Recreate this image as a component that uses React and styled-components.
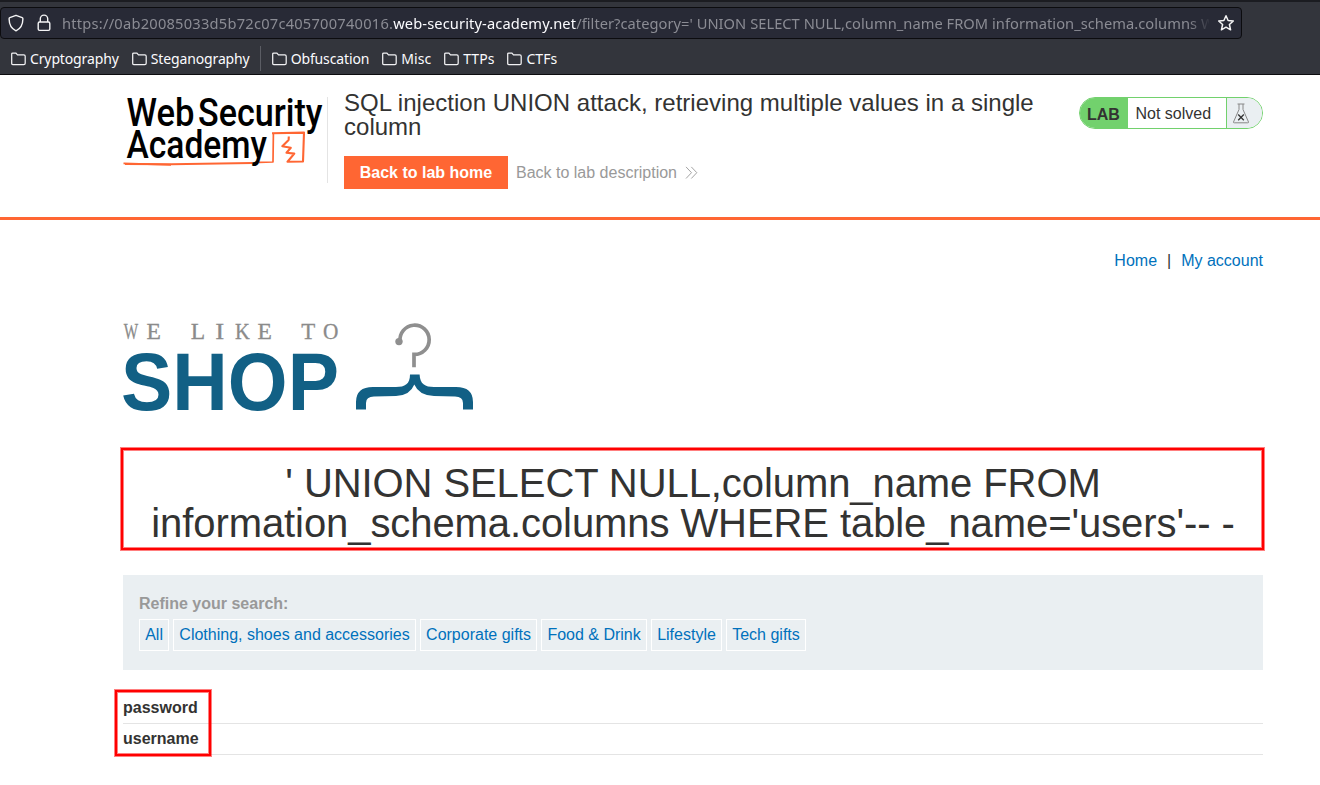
import React from "react";
import styled, { createGlobalStyle } from "styled-components";

const GlobalStyle = createGlobalStyle`
  * { box-sizing: border-box; }
  body { margin: 0; background: #fff; color: #333332; font: 16px/16px "Liberation Sans", Arial, sans-serif; }
  svg { display: block; flex: none; }
`;

const Page = styled.div`
  width: 1320px;
  height: 785px;
  overflow: hidden;
`;

const Chrome = styled.header`
  height: 75px;
  background: #33353c;
  border-top: 2px solid #1b1c21;
  border-bottom: 1px solid #0c0c0f;
  padding-top: 5px;
  font-family: "Noto Sans", sans-serif;
`;

const AddressBar = styled.div`
  width: 1242px;
  height: 32px;
  display: flex;
  align-items: center;
  padding: 0 6px;
  border: 1px solid #0c0c0f;
  border-radius: 4px;
  background: #282a36;
  color: #f4f4f5;
`;

const Url = styled.div`
  width: 1149px;
  margin-left: 10px;
  overflow: hidden;
  white-space: pre;
  font-size: 14.667px;
  line-height: 28px;
  color: #8b8c94;
  mask-image: linear-gradient(to right, #000 1126px, transparent 1149px);
`;

const UrlPart = styled.span`
  color: ${(p) => (p.$strong ? "#fbfbfe" : "inherit")};
  letter-spacing: ${(p) => p.$spacing}px;
`;

const Bookmarks = styled.nav`
  height: 35px;
  display: flex;
  align-items: center;
  padding-left: 11px;
  padding-top: 4px;
`;

const Bookmark = styled.div`
  display: flex;
  align-items: center;
  gap: 4px;
  margin-right: 13px;
  color: #fbfbfe;
  font-size: 14px;
  letter-spacing: ${(p) => (p.$short ? 0.05 : -0.13)}px;
  line-height: 20px;
  white-space: nowrap;
`;

const BookmarkDivider = styled.div`
  width: 1px;
  height: 25px;
  margin: 0 11px 0 -3px;
  background: #5b5d64;
`;

const LabHeader = styled.section`
  height: 145px;
  display: flex;
  align-items: flex-start;
  padding: 16px 57px 0 123px;
  border-bottom: 3px solid #ff6633;
`;

const LogoCell = styled.div`
  width: 205px;
  height: 86px;
  margin-top: 6px;
  border-right: 1px solid #e4e4e4;
`;

const TitleBlock = styled.div`
  flex: 1;
  padding-left: 16px;
`;

const LabTitle = styled.h2`
  width: 700px;
  margin: 0 0 17px;
  font-size: 24px;
  line-height: 24px;
  letter-spacing: 0.015px;
  font-weight: 400;
`;

const Actions = styled.div`
  display: flex;
  align-items: center;
`;

const LabButton = styled.a`
  width: 164px;
  height: 33px;
  background: #ff6633;
  color: #fff;
  font-weight: 700;
  line-height: 33px;
  text-align: center;
`;

const DescriptionLink = styled.a`
  display: flex;
  align-items: center;
  gap: 8px;
  margin-left: 8px;
  color: #999;
`;

const StatusBadge = styled.div`
  width: 184px;
  height: 32px;
  margin-top: 6px;
  display: flex;
  overflow: hidden;
  border: 1px solid #72d16d;
  border-radius: 16px;
  line-height: 31px;
`;

const BadgeLabel = styled.b`
  width: 48px;
  padding: 1px 0 0 7px;
  background: #72d16d;
`;

const BadgeStatus = styled.span`
  width: 99px;
  padding-left: 7.5px;
  border-right: 1px solid #72d16d;
`;

const BadgeIcon = styled.span`
  flex: 1;
  padding: 5px 0 0 5px;
  background: #eaeff2;
`;

const Content = styled.main`
  width: 1140px;
  margin-left: 123px;
`;

const TopLinks = styled.nav`
  height: 98px;
  display: flex;
  justify-content: flex-end;
  gap: 10px;
  padding-top: 33px;
`;

const Link = styled.a`
  color: #0071bc;
`;

const redOutline = `
  border: 2px solid #ff0000;
  box-shadow: 0 0 0 1px rgba(255, 0, 0, 0.5), inset 0 0 0 1px rgba(255, 0, 0, 0.5);
`;

const Headline = styled.div`
  height: 102px;
  width: 1143px;
  margin: 33px 0 0 -2px;
  padding: 13px 0 0 1px;
  ${redOutline}
`;

const HeadlineText = styled.h1`
  margin: 0;
  font-size: 40px;
  line-height: 40px;
  letter-spacing: -0.08px;
  font-weight: 400;
  text-align: center;
`;

const Filters = styled.section`
  height: 95px;
  margin: 25px 0 21px;
  padding: 21px 16px 0;
  background: #eaeff2;
`;

const FilterTitle = styled.div`
  color: #999;
  font-weight: 700;
  margin-bottom: 7px;
`;

const FilterList = styled.div`
  display: flex;
  gap: 4px;
`;

const Filter = styled.a`
  height: 32px;
  padding: 0 5.2px;
  border: 1px solid #fff;
  color: #0071bc;
  line-height: 30px;
  white-space: nowrap;
`;

const Results = styled.div`
  position: relative;
`;

const ResultRow = styled.div`
  height: ${(p) => (p.$first ? 33 : 31)}px;
  padding-top: ${(p) => (p.$first ? 9 : 7)}px;
  border-bottom: 1px solid #e4e4e4;
  font-weight: 700;
`;

const Highlight = styled.div`
  position: absolute;
  left: -8px;
  top: -1px;
  width: 96px;
  height: 66px;
  ${redOutline}
`;

const FolderIcon = () => (
  <svg width="15" height="14" viewBox="0 0 15 14" fill="none" stroke="#f1f1f3" strokeWidth="1.25">
    <path d="M.7 11.5V2.1Q.7 1 1.8 1h3.1l1.6 1.8h6.3q1.4 0 1.4 1.4v7q0 1.3-1.4 1.3H1.8Q.7 12.5.7 11.5Z" />
  </svg>
);

const ShieldIcon = () => (
  <svg width="18" height="18" viewBox="0 0 18 18" fill="none" stroke="#f4f4f5" strokeWidth="1.4" strokeLinejoin="round">
    <path d="M9 1.3 15.2 3.7Q16 4 15.9 5C15.8 11 13.5 14.8 9 16.8 4.5 14.8 2.2 11 2.1 5Q2 4 2.8 3.7Z" />
  </svg>
);

const Lock = styled.svg`
  margin-left: 11px;
`;

const LockIcon = () => (
  <Lock width="16" height="18" viewBox="0 0 16 18" fill="none" stroke="#f4f4f5" strokeWidth="1.4">
    <rect x="2.2" y="8" width="11.6" height="8.4" rx="1.4" />
    <path d="M4.3 8V4.8a3.7 3.7 0 0 1 7.4 0V8" />
  </Lock>
);

const Star = styled.svg`
  margin-left: 8px;
`;

const StarIcon = () => (
  <Star width="18" height="18" viewBox="0 0 18 18" fill="none" stroke="#f4f4f5" strokeWidth="1.5" strokeLinejoin="round">
    <path d="m9 1.8 2.1 4.7 5.2.5-3.9 3.5 1.2 5.3L9 13.2l-4.6 2.6 1.2-5.3L1.7 7l5.2-.5Z" />
  </Star>
);

const AcademyLogo = () => (
  <svg width="204" height="86" viewBox="123 97 204 86">
    <g fill="none" stroke="#ff6633" strokeLinejoin="round">
      <path d="M125 164 171 164.2 252 163" strokeWidth="2" />
      <path d="M123.5 163.3 171 164.8M259 162.3 273 162 273.4 133" strokeWidth="1.7" />
      <path d="M272 133.2 304 132.6 303 161.5 287.5 161.7 294.3 153.6 286.5 152.8 290.8 147.8 282.3 146.3 288.6 140 288.8 136.5" strokeWidth="2.1" />
    </g>
    <g fill="#000" fontFamily="Roboto, sans-serif" fontSize="38.5" fontWeight="500">
      <text x="126.5" y="125.8" textLength="68" lengthAdjust="spacingAndGlyphs">Web</text>
      <text x="198" y="125.8" textLength="124.5" lengthAdjust="spacingAndGlyphs">Security</text>
      <text x="126.5" y="158.3" textLength="140.5" lengthAdjust="spacingAndGlyphs">Academy</text>
    </g>
  </svg>
);

const ShopLogo = () => (
  <svg width="352" height="97" viewBox="123 318 352 97">
    <text y="338.7" fill="#8b8b8b" stroke="#8b8b8b" strokeWidth=".3" fontFamily="Liberation Serif, serif" fontSize="23">
      <tspan x="123.8" textLength="14.4" lengthAdjust="spacingAndGlyphs">W</tspan>
      <tspan x="146.4" textLength="14.4" lengthAdjust="spacingAndGlyphs">E</tspan>{" "}
      <tspan x="190.8" textLength="14.4" lengthAdjust="spacingAndGlyphs">L</tspan>
      <tspan x="215.3" textLength="9" lengthAdjust="spacingAndGlyphs">I</tspan>
      <tspan x="235" textLength="14.8" lengthAdjust="spacingAndGlyphs">K</tspan>
      <tspan x="257.4" textLength="14.4" lengthAdjust="spacingAndGlyphs">E</tspan>{" "}
      <tspan x="301.3" textLength="14" lengthAdjust="spacingAndGlyphs">T</tspan>
      <tspan x="323" textLength="15.4" lengthAdjust="spacingAndGlyphs">O</tspan>
    </text>
    <text x="121" y="409.7" textLength="218" lengthAdjust="spacingAndGlyphs" fill="#126085" fontFamily="Liberation Sans, sans-serif" fontWeight="700" fontSize="81">SHOP</text>
    <path d="M400.1 341.8A14.6 14.6 0 1 1 414 354.4V367.3" fill="none" stroke="#8f8f8f" strokeWidth="3.7" />
    <circle cx="399" cy="341.6" r="3.7" fill="#8f8f8f" />
    <path d="M410 374.5H419.6C420 384 425 387 434 387H456Q473 387 473 402V409.5H463V403Q463 396.5 455 396.5L434 396Q419 395.5 414.3 384.5Q410 395.5 396 396L374 396.5Q366 396.5 366 403V409.5H356V402Q356 387 373 387H396C405 387 410 384 410 374.5Z" fill="#126085" />
  </svg>
);

const FlaskIcon = () => (
  <svg width="18" height="21" viewBox="0 0 18 21" fill="none" stroke="#888" strokeWidth="1">
    <path d="M5.5 1h7M7 1v5.5L1.5 19q-.3.8.8.8h13.4q1.1 0 .8-.8L11 6.5V1" />
    <path d="m6.2 11.5 5.6 5.8M11.8 11.5l-5.6 5.8" stroke="#333" strokeWidth="1.3" />
  </svg>
);

const ChevronsIcon = () => (
  <svg width="13" height="14" viewBox="0 0 13 14" fill="none" stroke="#999" strokeWidth=".9">
    <path d="m1 .9 5.5 5.8L1 12.5M6.3.9l5.5 5.8-5.5 5.8" />
  </svg>
);

const folders = ["Cryptography", "Steganography", "Obfuscation", "Misc", "TTPs", "CTFs"];
const categories = ["All", "Clothing, shoes and accessories", "Corporate gifts", "Food & Drink", "Lifestyle", "Tech gifts"];
const results = ["password", "username"];

export default function App() {
  return (
    <Page>
      <GlobalStyle />
      <Chrome>
        <AddressBar>
          <ShieldIcon />
          <LockIcon />
          <Url>
            <UrlPart $spacing={0.23}>https://0ab20085033d5b72c07c405700740016.</UrlPart>
            <UrlPart $strong $spacing={0.12}>web-security-academy.net</UrlPart>
            <UrlPart $spacing={0.04}>{"/filter?category=' UNION SELECT NULL,column_name FROM information_schema.columns W"}</UrlPart>
          </Url>
          <StarIcon />
        </AddressBar>
        <Bookmarks>
          {folders.map((name, i) => (
            <React.Fragment key={name}>
              {i === 2 && <BookmarkDivider />}
              <Bookmark $short={name.length < 5}><FolderIcon />{name}</Bookmark>
            </React.Fragment>
          ))}
        </Bookmarks>
      </Chrome>
      <LabHeader>
        <LogoCell><AcademyLogo /></LogoCell>
        <TitleBlock>
          <LabTitle>SQL injection UNION attack, retrieving multiple values in a single column</LabTitle>
          <Actions>
            <LabButton>Back to lab home</LabButton>
            <DescriptionLink>Back to lab description<ChevronsIcon /></DescriptionLink>
          </Actions>
        </TitleBlock>
        <StatusBadge>
          <BadgeLabel>LAB</BadgeLabel>
          <BadgeStatus>Not solved</BadgeStatus>
          <BadgeIcon><FlaskIcon /></BadgeIcon>
        </StatusBadge>
      </LabHeader>
      <Content>
        <TopLinks>
          <Link>Home</Link><span>|</span><Link>My account</Link>
        </TopLinks>
        <ShopLogo />
        <Headline>
          <HeadlineText>' UNION SELECT NULL,column_name FROM information_schema.columns WHERE table_name='users'-- -</HeadlineText>
        </Headline>
        <Filters>
          <FilterTitle>Refine your search:</FilterTitle>
          <FilterList>{categories.map((name) => <Filter key={name}>{name}</Filter>)}</FilterList>
        </Filters>
        <Results>
          {results.map((name, i) => <ResultRow key={name} $first={i === 0}>{name}</ResultRow>)}
          <Highlight />
        </Results>
      </Content>
    </Page>
  );
}
